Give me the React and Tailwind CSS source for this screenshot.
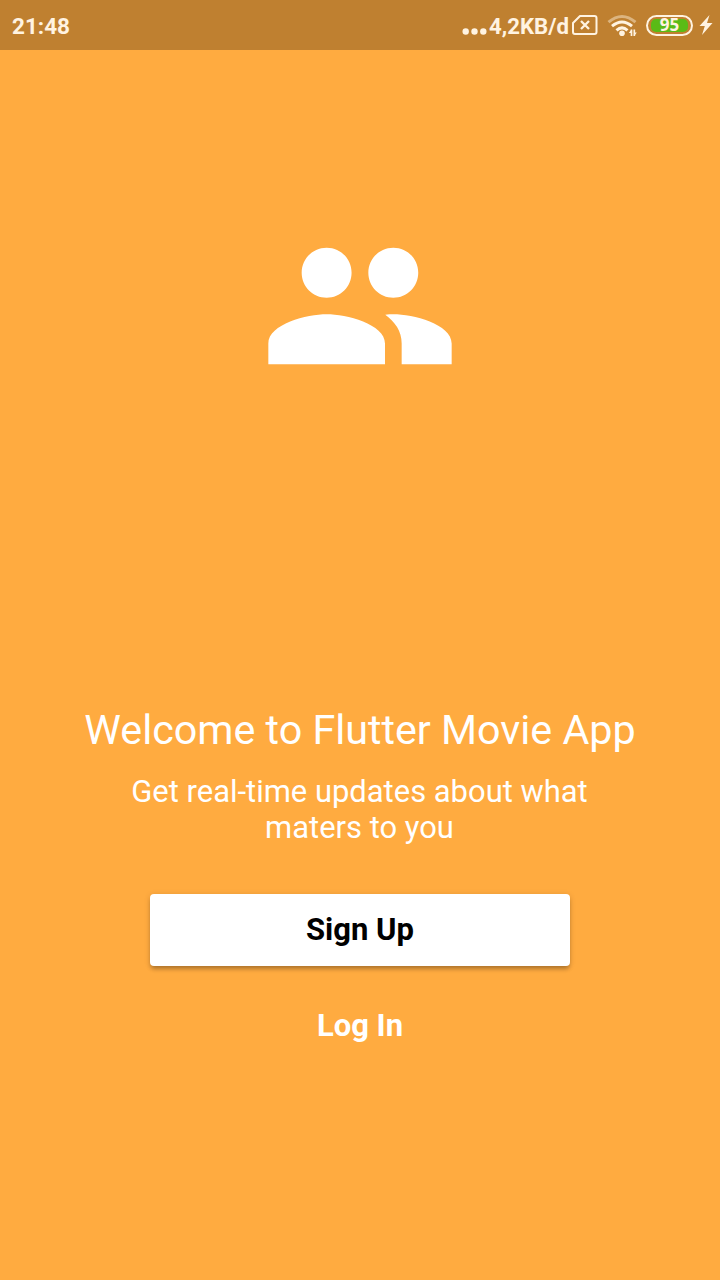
function StatusBar() {
  return (
    <header className="flex h-[50px] w-full items-center justify-between bg-[#bf8030] pl-3 pr-[7px] text-[#fff3e1]">
      <span className="pt-[2px] text-[22.5px] font-bold leading-[27px]">21:48</span>
      <div className="flex items-center">
        <svg className="mr-[2px] mt-[12px] h-[7px] w-[25px]" viewBox="0 0 25 7" fill="currentColor">
          <circle cx="3.7" cy="3.5" r="3.2" />
          <circle cx="12.5" cy="3.5" r="3.2" />
          <circle cx="21.3" cy="3.5" r="3.2" />
        </svg>
        <span className="pt-[3px] text-[22.2px] font-bold leading-[27px]">4,2KB/d</span>
        <svg className="ml-[3px] h-5 w-[26px]" viewBox="0 0 26 20" fill="none" stroke="currentColor" strokeWidth="2">
          <path d="M8 1h14.5a2 2 0 0 1 2 2v14a2 2 0 0 1-2 2H3a2 2 0 0 1-2-2V8z" strokeLinejoin="round" />
          <path d="M9 6l8 8M17 6l-8 8" strokeWidth="2.3" />
        </svg>
        <svg className="ml-[9px] mr-px mt-[2px] h-[24px] w-[30px]" viewBox="0 0 30 24" fill="none" stroke="currentColor" strokeWidth="3">
          <path d="M1.5 8.2Q15-3.2 28.5 8.2" opacity=".45" />
          <path d="M5 12.2Q15 3.8 25 12.2" />
          <path d="M9.5 16.3Q15 11.4 20.5 16.3" />
          <circle cx="15" cy="19.3" r="2.8" fill="currentColor" stroke="none" />
          <path d="M24.5 15.5v6.5M27.3 15.5v6.5" strokeWidth="1.7" />
          <path d="M21.8 19L24.5 15.5v3.5zM29.8 18.5L27.3 22v-3.5z" fill="currentColor" stroke="none" />
        </svg>
        <div className="ml-[8px] flex h-[21px] w-[47px] items-center justify-center rounded-full border-2 border-current p-[2px]">
          <div className="flex h-[13px] w-[37px] items-center justify-center rounded-[5px] bg-[#5abb16]">
            <span className="pb-[2px] font-['Noto_Sans',sans-serif] text-[17px] font-bold leading-none">95</span>
          </div>
        </div>
        <svg className="ml-[6px] h-5 w-[14px]" viewBox="0 0 14 20" fill="currentColor">
          <path d="M10.5 0L0.5 11h5.3L3 20L13.5 8H8z" />
        </svg>
      </div>
    </header>
  );
}

export default function App() {
  return (
    <main className="flex h-[1280px] w-[720px] flex-col items-center overflow-hidden bg-[#ffab40] font-['Roboto',sans-serif] text-white">
      <StatusBar />
      <svg className="mt-[156px] h-[200px] w-[200px] shrink-0" viewBox="0 0 24 24" fill="currentColor">
        <path d="M16 11c1.66 0 2.99-1.34 2.99-3S17.66 5 16 5c-1.66 0-3 1.34-3 3s1.34 3 3 3zm-8 0c1.66 0 2.99-1.34 2.99-3S9.66 5 8 5C6.34 5 5 6.34 5 8s1.34 3 3 3zm0 2c-2.33 0-7 1.17-7 3.5V19h14v-2.5c0-2.33-4.67-3.5-7-3.5zm8 0c-.29 0-.62.02-.97.05 1.16.84 1.97 1.97 1.97 3.45V19h6v-2.5c0-2.33-4.67-3.5-7-3.5z" />
      </svg>
      <h1 className="mt-[300px] text-[41.25px] font-normal leading-[48px]">Welcome to Flutter Movie App</h1>
      <p className="mt-[20px] w-[500px] pr-px text-center text-[30.95px] leading-9">
        Get real-time updates about what
        <br />
        maters to you
      </p>
      <button className="mt-[48px] h-[72px] w-[420px] rounded-[4px] bg-white text-[31px] font-bold leading-9 text-black shadow-[0_4px_4px_-1px_rgba(0,0,0,0.25),0_1px_6px_rgba(0,0,0,0.13)]">
        Sign Up
      </button>
      <button className="mt-6 h-[72px] w-[420px] text-[31px] font-bold leading-9">Log In</button>
    </main>
  );
}
